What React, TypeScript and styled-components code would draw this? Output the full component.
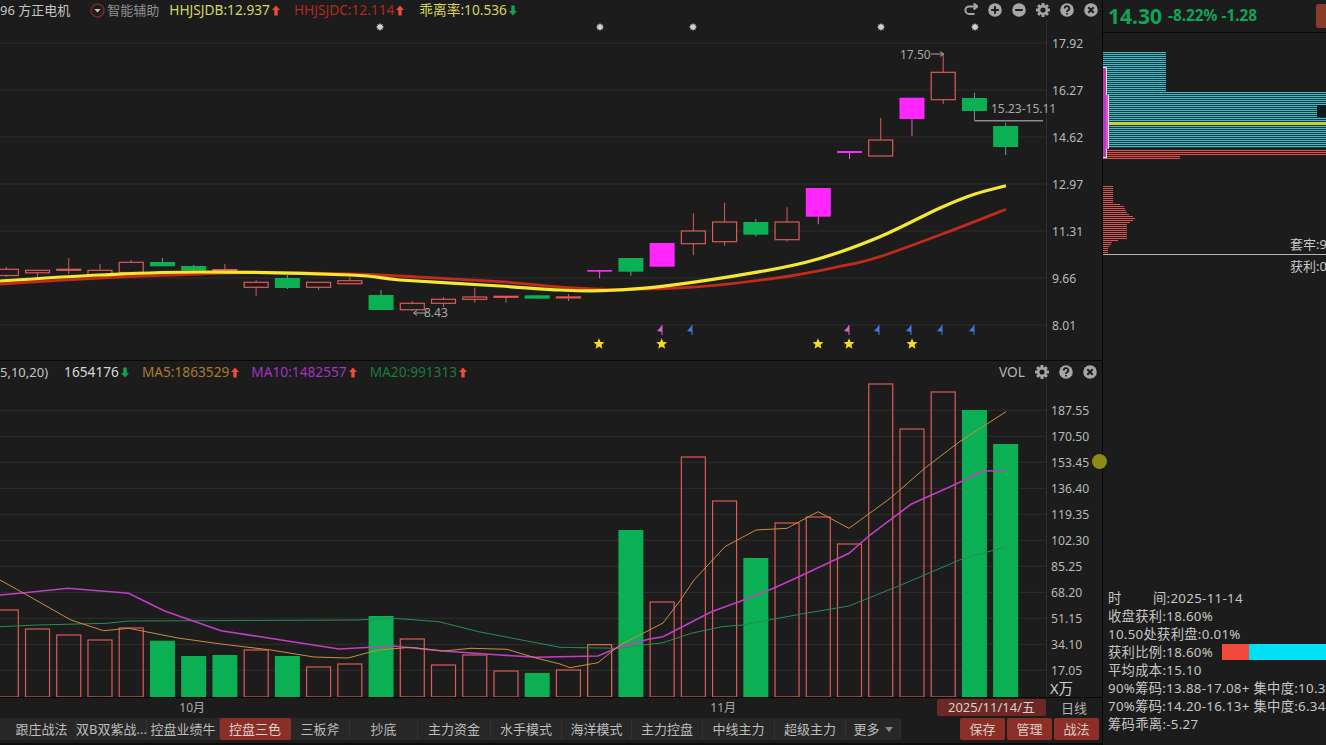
import React from "react";
import styled, { createGlobalStyle } from "styled-components";

const Global = createGlobalStyle`
  html, body { margin: 0; padding: 0; background: #1b1c1b; overflow: hidden; }
  #root { width: 1326px; height: 745px; }
`;

const FONT = `"Noto Sans", "Noto Sans CJK SC", sans-serif`;
const RED = "#dd5a55";
const GREEN = "#0bb055";
const MAGENTA = "#ff26ff";
const GRID = "#2f2f2d";

const App_ = styled.div`
  position: relative;
  display: flex;
  width: 1326px;
  height: 745px;
  overflow: hidden;
  background: #1b1c1b;
  font: 13px/18px ${FONT};
  color: #c4c4c4;
`;
const LeftColumn = styled.div`
  display: flex;
  flex-direction: column;
  width: 1102px;
  flex: none;
  border-right: 1px solid #050505;
`;
const Pane = styled.section<{ $h: number }>`
  display: flex;
  flex-direction: column;
  height: ${(p) => p.$h}px;
  box-sizing: border-box;
  flex: none;
  border-bottom: 1px solid #060606;
`;
const Header = styled.div<{ $top?: number }>`
  display: flex;
  align-items: center;
  height: 20px;
  box-sizing: border-box;
  padding-top: ${(p) => p.$top ?? 0}px;
  flex: none;
  white-space: nowrap;
`;
const Legend = styled.span<{ $c: string; $x: number; $small?: boolean }>`
  display: inline-flex;
  align-items: center;
  gap: 2px;
  font-size: ${(p) => (p.$small ? 13 : 13.7)}px;
  color: ${(p) => p.$c};
  margin-left: ${(p) => p.$x}px;
`;
const Spacer = styled.div`
  flex: 1;
`;
const Tools = styled.div<{ $gap: number; $right: number }>`
  display: flex;
  align-items: center;
  gap: ${(p) => p.$gap}px;
  margin-right: ${(p) => p.$right}px;
`;
const ChartSvg = styled.svg`
  display: block;
  flex: 1;
  width: 1102px;
  min-height: 0;
`;
const AxisText = styled.text<{ $big?: boolean }>`
  font: ${(p) => (p.$big ? 14.5 : 12.2)}px ${FONT};
  fill: ${(p) => (p.$big ? "#cfcfcf" : "#b9b9b9")};
`;
const ChartNote = styled.text`
  font: 12px ${FONT};
  fill: #a9a9a9;
`;
const DateRow = styled.div`
  display: flex;
  align-items: center;
  height: 19px;
  flex: none;
`;
const Month = styled.span<{ $w: number }>`
  width: ${(p) => p.$w}px;
  text-align: right;
  color: #a9a9a9;
  font-size: 12px;
  flex: none;
`;
const DateBadge = styled.span`
  margin-left: auto;
  width: 109px;
  height: 17px;
  line-height: 17px;
  text-align: center;
  background: #6b2825;
  border-radius: 2px;
  color: #d9d0cc;
`;
const Period = styled.span`
  width: 56px;
  text-align: center;
  color: #b4b4b4;
`;
const BottomBar = styled.div`
  display: flex;
  height: 28px;
  flex: none;
  padding: 1px 0 3px;
  box-sizing: border-box;
  border-bottom: 2px solid #0c0c0c;
`;
const Tabs = styled.div`
  display: flex;
  width: 901px;
  padding-left: 7px;
  box-sizing: border-box;
  background: #262726;
  border-radius: 0 3px 3px 0;
  flex: none;
`;
const Tab = styled.div<{ $w: number; $active?: boolean }>`
  width: ${(p) => p.$w}px;
  flex: none;
  display: flex;
  align-items: center;
  justify-content: center;
  gap: 5px;
  box-sizing: border-box;
  white-space: nowrap;
  background: ${(p) => (p.$active ? "#8a2f28" : "transparent")};
  border-radius: 2px;
  border-right: 1px solid ${(p) => (p.$active ? "transparent" : "#323331")};
  color: ${(p) => (p.$active ? "#e0d0ca" : "#bdbdbd")};
`;
const Caret = styled.span`
  width: 0;
  height: 0;
  border: 4px solid transparent;
  border-top: 5px solid #8a8a8a;
  border-bottom: 0;
`;
const Actions = styled.div`
  display: flex;
  gap: 2px;
  margin-left: auto;
  margin-right: 3px;
`;
const Action = styled.div`
  width: 45px;
  display: flex;
  align-items: center;
  justify-content: center;
  background: #8c2f29;
  border-radius: 2px;
  color: #dccbc4;
`;
const RightPanel = styled.aside`
  flex: 1;
  min-width: 0;
  display: flex;
  flex-direction: column;
  overflow: hidden;
`;
const Quote = styled.div`
  display: flex;
  align-items: center;
  gap: 6px;
  height: 32px;
  flex: none;
  padding-left: 5px;
  border-bottom: 1px solid #060606;
  color: #10a456;
  font-weight: 700;
  white-space: nowrap;
`;
const Price = styled.span`
  font-size: 21px;
`;
const Delta = styled.span`
  font-size: 15.4px;
`;
const QuoteButton = styled.span`
  margin-left: auto;
  width: 10px;
  height: 24px;
  background: #8c3a2c;
  border-radius: 2px 0 0 2px;
`;
const ChipSvg = styled.svg`
  display: block;
  width: 223px;
  height: 556px;
  flex: none;
`;
const ChipLabel = styled.text`
  font: 13px ${FONT};
  fill: #c8c8c8;
`;
const Info = styled.div`
  display: flex;
  flex-direction: column;
  padding-left: 5px;
  font-size: 13.3px;
  letter-spacing: 0.3px;
`;
const InfoRow = styled.div`
  display: flex;
  align-items: center;
  height: 18px;
  white-space: nowrap;
  color: #c6c6c6;
`;
const Wide = styled.span`
  width: 45px;
  flex: none;
`;
const Ratio = styled.div`
  margin-left: auto;
  display: flex;
  width: 104px;
  height: 16px;
  flex: none;
`;
const RatioPart = styled.span<{ $c: string; $w: number }>`
  width: ${(p) => p.$w}px;
  background: ${(p) => p.$c};
  flex: none;
`;
const Knob = styled.div`
  position: absolute;
  left: 1092px;
  top: 454px;
  width: 15px;
  height: 15px;
  border-radius: 50%;
  background: #8e8a17;
`;

type Candle = [number, number, number, number, "r" | "g" | "m"];
// index-based: wick top, wick bottom, body top, body bottom, kind
const candles: Candle[] = [
  [267, 277, 269.3, 275.5, "r"], [270, 278, 270.3, 272.8, "r"], [258, 274, 269.3, 270.3, "r"],
  [264, 275, 270.3, 274.5, "r"], [260, 273, 262.3, 272.5, "r"], [258, 266, 262, 266.3, "g"],
  [265, 271, 266, 270.5, "g"], [264, 272, 269.6, 270.4, "r"], [280, 295.7, 282.3, 287.3, "r"],
  [275, 289, 278, 288, "g"], [282, 290, 282.3, 287.3, "r"], [276.7, 284, 280.7, 283.7, "r"],
  [290, 310, 295, 310, "g"], [301, 311, 303.3, 309.7, "r"], [297, 307, 299.3, 303.3, "r"],
  [287.7, 302.7, 297, 299.3, "r"], [296, 302.7, 296.3, 297, "r"], [295, 299, 295.3, 298.7, "g"],
  [294, 301, 296.9, 297.6, "r"], [270, 278.3, 270, 271.7, "m"], [258, 275.7, 258, 271.7, "g"],
  [243, 266.7, 243, 266.7, "m"], [213.3, 255.3, 231, 243.7, "r"], [202.7, 246, 222, 241.7, "r"],
  [219, 236.5, 222, 234.7, "g"], [207.3, 241.7, 222, 239.7, "r"], [188, 224.3, 188, 216.7, "m"],
  [151, 159, 151, 153, "m"], [118, 156, 140, 156, "r"], [97.7, 136, 97.7, 119, "m"],
  [53, 104, 72.3, 99.7, "r"], [92.7, 120.7, 98, 111, "g"], [122.7, 155, 126, 147, "g"],
];
const vols: [number, boolean][] = [
  [610, false], [629, false], [635, false], [640, false], [628, false], [640.7, true], [656, true],
  [655, true], [650, false], [656, true], [667, false], [664, false], [616, true], [639, false],
  [665, false], [655, false], [671, false], [673, true], [670, false], [644.7, false], [530, true],
  [602, false], [457, false], [501, false], [558, true], [523, false], [517, false], [544, false],
  [384, false], [429, false], [392, false], [410, true], [444, true],
];
const cx = (i: number) => 6.3 + 31.23 * i;
const BASE = 697;

const priceTicks: [number, string][] = [
  [43, "17.92"], [90, "16.27"], [137, "14.62"], [184, "12.97"], [231, "11.31"], [278, "9.66"], [325, "8.01"],
];
const volTicks = ["187.55", "170.50", "153.45", "136.40", "119.35", "102.30", "85.25", "68.20", "51.15", "34.10", "17.05"];

const P = (a: number[][]) => a.map((p) => p.join(",")).join(" ");
// smooth curve through the points (Catmull-Rom)
const smooth = (a: number[][]) => {
  let d = `M${a[0][0]} ${a[0][1]}`;
  for (let i = 0; i < a.length - 1; i++) {
    const p0 = a[Math.max(i - 1, 0)];
    const p1 = a[i];
    const p2 = a[i + 1];
    const p3 = a[Math.min(i + 2, a.length - 1)];
    const c1 = [p1[0] + (p2[0] - p0[0]) / 6, p1[1] + (p2[1] - p0[1]) / 6];
    const c2 = [p2[0] - (p3[0] - p1[0]) / 6, p2[1] - (p3[1] - p1[1]) / 6];
    d += `C${c1[0].toFixed(1)} ${c1[1].toFixed(1)} ${c2[0].toFixed(1)} ${c2[1].toFixed(1)} ${p2[0]} ${p2[1]}`;
  }
  return d;
};
const yellow = [[0, 281], [100, 275], [200, 272], [350, 275], [400, 280], [500, 286], [560, 290], [600, 290.7], [660, 286.7], [760, 271.7], [818, 259], [880, 236.7], [940, 208], [975, 194], [1006, 185.7]];
const redMa = [[0, 284], [100, 278], [200, 274], [260, 272.7], [350, 274], [400, 276], [500, 281.7], [560, 287], [620, 289.4], [700, 286.7], [790, 276], [850, 264.3], [880, 256.7], [945, 233], [1006, 209.3]];
const ma5 = [[0, 580], [21, 591.7], [71, 620], [103.5, 630.7], [128.6, 628.3], [178, 638], [221, 644], [271, 650], [314, 657], [348, 658], [378, 650], [411, 647.3], [443, 651], [471, 648.3], [507, 649.3], [536, 658], [560, 664], [570, 667.7], [598, 662.7], [618.5, 646], [663, 623], [680.5, 600], [694, 580], [725, 546.7], [756, 530], [787, 528.3], [818, 511.7], [849, 528.3], [890.6, 498], [925, 468], [959.5, 441.7], [1006, 411.7]];
const ma10 = [[0, 595], [25, 592.7], [68, 588.3], [128.6, 593.3], [164, 610.7], [221, 630.7], [286, 640.7], [339, 649], [393, 646], [443, 651], [500, 655], [536, 657.3], [560, 656.7], [598, 656], [618.5, 647.3], [649.5, 639], [663, 636.7], [711.5, 611.7], [739, 601.7], [773.5, 588.3], [794, 579], [849, 553.3], [870, 535], [911, 504.3], [949, 487.3], [983.5, 471], [1006, 470.7]];
const ma20 = [[0, 626.7], [36, 625], [107, 623.3], [128.6, 621], [357, 620], [393, 618.3], [439, 621.7], [478.6, 631.7], [560, 647.3], [618.5, 648.3], [663, 642.7], [691, 633.3], [722, 626.7], [742.5, 625], [801, 614], [849, 606], [901, 585], [959.5, 560], [1006, 546.7]];

const stars = [599, 661.7, 818, 849, 912];
const flags: [number, string][] = [[662, "#d860c8"], [692, "#3f78d8"], [849, "#d860c8"], [879, "#3f78d8"], [911, "#3f78d8"], [942, "#3f78d8"], [974, "#3f78d8"]];
const sparks = [380, 600, 693, 881, 975];

const starPoints = (x: number, y: number, r: number, n = 5, inner = 0.45) =>
  Array.from({ length: n * 2 }, (_, i) => {
    const a = (Math.PI / n) * i - Math.PI / 2;
    const q = i % 2 ? r * inner : r;
    return `${(x + q * Math.cos(a)).toFixed(2)},${(y + q * Math.sin(a)).toFixed(2)}`;
  }).join(" ");

const Arrow = ({ up }: { up: boolean }) => (
  <svg width="8" height="11" viewBox="0 0 8 11">
    <polygon
      fill={up ? "#ee4a3e" : "#12a24f"}
      points={up ? "4,0.5 8,5 5.7,5 5.7,10.5 2.3,10.5 2.3,5 0,5" : "4,10.5 8,6 5.7,6 5.7,0.5 2.3,0.5 2.3,6 0,6"}
    />
  </svg>
);

type IconKind = "back" | "plus" | "minus" | "gear" | "help" | "close";
const Ico = "#a6a6a6";
const Dark = "#1b1c1b";
const ToolIcon = ({ kind }: { kind: IconKind }) => (
  <svg width="14" height="14" viewBox="0 0 14 14">
    {kind === "back" && (
      <path d="M12.8 3.4H5.2A3.8 3.8 0 0 0 5.2 11H10.5M9.6 0.4L13.4 3.4 9.6 6.4" fill="none" stroke={Ico} strokeWidth="2" />
    )}
    {kind === "gear" && (
      <g>
        {[0, 45, 90, 135].map((a) => (
          <rect key={a} x="5.5" y="0" width="3" height="14" rx="0.6" fill={Ico} transform={`rotate(${a} 7 7)`} />
        ))}
        <circle cx="7" cy="7" r="5" fill={Ico} />
        <circle cx="7" cy="7" r="2.6" fill={Dark} />
      </g>
    )}
    {(kind === "plus" || kind === "minus" || kind === "help" || kind === "close") && <circle cx="7" cy="7" r="6.8" fill={Ico} />}
    {kind === "plus" && <path d="M3.2 7H10.8M7 3.2V10.8" stroke={Dark} strokeWidth="2" />}
    {kind === "minus" && <path d="M3.2 7H10.8" stroke={Dark} strokeWidth="2" />}
    {kind === "close" && <path d="M4.3 4.3L9.7 9.7M9.7 4.3L4.3 9.7" stroke={Dark} strokeWidth="2" />}
    {kind === "help" && (
      <g fill="none" stroke={Dark} strokeWidth="1.8">
        <path d="M4.7 5.4A2.3 2.2 0 1 1 7.9 7.4C7.2 7.8 7 8.1 7 9.1" />
        <path d="M7 10V11.6" />
      </g>
    )}
  </svg>
);
const AssistIcon = () => (
  <svg width="15" height="15" viewBox="0 0 15 15">
    <circle cx="7.5" cy="7.5" r="6.5" fill="#211b1b" stroke="#7a2a2a" strokeWidth="1.4" />
    <polygon points="4.4,6 10.6,6 7.5,9.6" fill="#c4c4c4" />
  </svg>
);

const CandleMark = ({ i, c }: { i: number; c: Candle }) => {
  const [wt, wb, bt, bb, kind] = c;
  const x = cx(i);
  const colour = kind === "r" ? RED : kind === "g" ? GREEN : MAGENTA;
  const wick = kind === "g" ? "#6f9d7f" : kind === "m" ? "#e45ee4" : RED;
  return (
    <g>
      <line x1={x} x2={x} y1={wt} y2={wb} stroke={wick} strokeWidth="1" />
      <rect
        x={x - (kind === "r" ? 12 : 12.5)}
        y={bt}
        width={kind === "r" ? 24 : 25}
        height={Math.max(bb - bt, 1)}
        fill={kind === "r" ? "#1b1c1b" : colour}
        stroke={kind === "r" ? colour : "none"}
        strokeWidth="1.2"
      />
    </g>
  );
};

const PriceChart = () => (
  <ChartSvg viewBox="0 20 1102 340">
    {priceTicks.map(([y]) => (
      <line key={y} x1="0" x2="1046" y1={y} y2={y} stroke={GRID} />
    ))}
    <line x1="1046.5" x2="1046.5" y1="20" y2="360" stroke={GRID} />
    {priceTicks.map(([y, t]) => (
      <AxisText key={t} x="1052" y={y + 4.5}>{t}</AxisText>
    ))}
    {sparks.map((x) => (
      <polygon key={x} points={starPoints(x, 27, 4, 8, 0.62)} fill="#cfcfcf" />
    ))}
    {candles.map((c, i) => (
      <CandleMark key={i} i={i} c={c} />
    ))}
    <path d={smooth(redMa)} fill="none" stroke="#c22a1c" strokeWidth="2.8" />
    <path d={smooth(yellow)} fill="none" stroke="#f3e832" strokeWidth="3.2" />
    <ChartNote x="900" y="59">17.50</ChartNote>
    <path d="M931 54H943M940 51.5L943.5 54 940 56.5" fill="none" stroke="#a9a9a9" />
    <ChartNote x="991" y="113">15.23-15.11</ChartNote>
    <line x1="974.5" x2="1043" y1="120.7" y2="120.7" stroke="#8d8d8b" strokeWidth="1.4" />
    <path d="M426 313H414M417 310.5L413.5 313 417 315.5" fill="none" stroke="#a9a9a9" />
    <ChartNote x="424" y="317">8.43</ChartNote>
    {flags.map(([x, c]) => (
      <g key={x}>
        <line x1={x} x2={x} y1="325" y2="335" stroke={c} />
        <polygon points={`${x},325.5 ${x - 5},331 ${x},332`} fill={c} />
      </g>
    ))}
    {stars.map((x) => (
      <polygon key={x} points={starPoints(x, 344, 5.8)} fill="#f5dc1f" />
    ))}
  </ChartSvg>
);

const VolumeChart = () => (
  <ChartSvg viewBox="0 381 1102 316">
    {volTicks.map((t, i) => (
      <line key={t} x1="0" x2="1046" y1={410.3 + i * 26} y2={410.3 + i * 26} stroke={GRID} />
    ))}
    <line x1="1046.5" x2="1046.5" y1="381" y2="697" stroke={GRID} />
    {volTicks.map((t, i) => (
      <AxisText key={t} x="1051" y={415 + i * 26}>{t}</AxisText>
    ))}
    <AxisText $big x="1050" y="694">X万</AxisText>
    {vols.map(([top, down], i) => (
      <rect
        key={i}
        x={cx(i) - (down ? 12.5 : 12)}
        y={top}
        width={down ? 25 : 24}
        height={BASE - top}
        fill={down ? GREEN : "none"}
        stroke={down ? "none" : i === 19 ? "#d9714f" : RED}
        strokeWidth="1.2"
      />
    ))}
    <polyline points={P(ma20)} fill="none" stroke="#2c8a52" strokeWidth="1" />
    <polyline points={P(ma10)} fill="none" stroke="#c13ec7" strokeWidth="1.6" />
    <polyline points={P(ma5)} fill="none" stroke="#c98c44" strokeWidth="1" />
  </ChartSvg>
);

// width of the lower profile at a given y (straight runs between these knots)
const profile: [number, number][] = [[186, 10], [202, 10], [205, 20], [213, 24], [217, 32], [219, 32], [224, 24], [238, 24], [241, 10], [248, 5], [254, 5]];
const profileWidth = (y: number) => {
  for (let i = 0; i < profile.length - 1; i++) {
    const [a, wa] = profile[i];
    const [b, wb] = profile[i + 1];
    if (y <= b) return wa + ((wb - wa) * (y - a)) / (b - a);
  }
  return 5;
};
const profileRows = Array.from({ length: 35 }, (_, i) => 186 + i * 2);

const ChipChart = () => (
  <ChipSvg viewBox="1103 33 223 556" shapeRendering="crispEdges">
    <defs>
      <pattern id="stripe-cyan" width="4" height="2" patternUnits="userSpaceOnUse">
        <rect width="4" height="2" fill="#143a3e" />
        <rect width="4" height="1" fill="#45b7c5" />
      </pattern>
      <pattern id="stripe-red" width="4" height="2" patternUnits="userSpaceOnUse">
        <rect width="4" height="2" fill="#3b1715" />
        <rect width="4" height="1" fill="#d8544c" />
      </pattern>
    </defs>
    <rect x="1103" y="52" width="63" height="40" fill="url(#stripe-cyan)" />
    <rect x="1103" y="92" width="223" height="56" fill="url(#stripe-cyan)" />
    <rect x="1317" y="105" width="9" height="12" fill="#0f1a1b" />
    <rect x="1108" y="122" width="218" height="3" fill="#cdd12c" />
    <rect x="1103" y="149" width="223" height="6" fill="url(#stripe-red)" />
    <rect x="1103" y="155" width="77" height="4" fill="url(#stripe-red)" />
    <rect x="1103" y="67" width="3" height="91" fill="#b83cb8" />
    <rect x="1106" y="67" width="1" height="91" fill="#ece0ec" />
    <rect x="1103" y="67" width="4" height="1" fill="#ece0ec" />
    <rect x="1103" y="157" width="4" height="1" fill="#ece0ec" />
    <rect x="1106" y="95" width="2" height="54" fill="#e050e0" />
    <rect x="1108" y="95" width="1" height="54" fill="#e8dce8" />
    {profileRows.map((y) => (
      <rect key={y} x="1103" y={y} width={Math.round(profileWidth(y))} height="1" fill="#d8544c" />
    ))}
    <rect x="1103" y="254" width="223" height="1" fill="#b4b4b0" />
    <ChipLabel x="1290" y="249">套牢:9</ChipLabel>
    <ChipLabel x="1290" y="271">获利:0</ChipLabel>
  </ChipSvg>
);

const tabs: { t: string; w: number; active?: boolean }[] = [
  { t: "跟庄战法", w: 70 }, { t: "双B双紫战...", w: 70 }, { t: "控盘业绩牛", w: 73 },
  { t: "控盘三色", w: 71, active: true }, { t: "三板斧", w: 59 }, { t: "抄底", w: 68 },
  { t: "主力资金", w: 73 }, { t: "水手模式", w: 71 }, { t: "海洋模式", w: 70 },
  { t: "主力控盘", w: 71 }, { t: "中线主力", w: 72 }, { t: "超级主力", w: 71 },
];

export default function App() {
  return (
    <App_>
      <Global />
      <LeftColumn>
        <Pane $h={361}>
          <Header>
            <span>96 方正电机</span>
            <Legend $c="#8f8f8f" $x={20} $small><AssistIcon /> 智能辅助</Legend>
            <Legend $c="#d6d66c" $x={10}>HHJSJDB:12.937<Arrow up /></Legend>
            <Legend $c="#b3291f" $x={14}>HHJSJDC:12.114<Arrow up /></Legend>
            <Legend $c="#d6d45e" $x={15}>乖离率:10.536<Arrow up={false} /></Legend>
            <Spacer />
            <Tools $gap={10} $right={4}>
              <ToolIcon kind="back" />
              <ToolIcon kind="plus" />
              <ToolIcon kind="minus" />
              <ToolIcon kind="gear" />
              <ToolIcon kind="help" />
              <ToolIcon kind="close" />
            </Tools>
          </Header>
          <PriceChart />
        </Pane>
        <Pane $h={337}>
          <Header $top={2}>
            <span>5,10,20)</span>
            <Legend $c="#d8d8d8" $x={16}>1654176<Arrow up={false} /></Legend>
            <Legend $c="#ad7a32" $x={13}>MA5:1863529<Arrow up /></Legend>
            <Legend $c="#a433c4" $x={12}>MA10:1482557<Arrow up /></Legend>
            <Legend $c="#1d7a3d" $x={13}>MA20:991313<Arrow up /></Legend>
            <Spacer />
            <Legend $c="#b4b4b4" $x={0}>VOL</Legend>
            <Tools $gap={10} $right={5}>
              <span />
              <ToolIcon kind="gear" />
              <ToolIcon kind="help" />
              <ToolIcon kind="close" />
            </Tools>
          </Header>
          <VolumeChart />
        </Pane>
        <DateRow>
          <Month $w={205}>10月</Month>
          <Month $w={531}>11月</Month>
          <DateBadge>2025/11/14/五</DateBadge>
          <Period>日线</Period>
        </DateRow>
        <BottomBar>
          <Tabs>
            {tabs.map((t) => (
              <Tab key={t.t} $w={t.w} $active={t.active}>{t.t}</Tab>
            ))}
            <Tab $w={55}>更多<Caret /></Tab>
          </Tabs>
          <Actions>
            <Action>保存</Action>
            <Action>管理</Action>
            <Action>战法</Action>
          </Actions>
        </BottomBar>
      </LeftColumn>
      <RightPanel>
        <Quote>
          <Price>14.30</Price>
          <Delta>-8.22% -1.28</Delta>
          <QuoteButton />
        </Quote>
        <ChipChart />
        <Info>
          <InfoRow><Wide>时</Wide>间:2025-11-14</InfoRow>
          <InfoRow>收盘获利:18.60%</InfoRow>
          <InfoRow>10.50处获利盘:0.01%</InfoRow>
          <InfoRow>获利比例:18.60%<Ratio><RatioPart $c="#f24a3a" $w={27} /><RatioPart $c="#00e0f5" $w={77} /></Ratio></InfoRow>
          <InfoRow>平均成本:15.10</InfoRow>
          <InfoRow>90%筹码:13.88-17.08+ 集中度:10.33</InfoRow>
          <InfoRow>70%筹码:14.20-16.13+ 集中度:6.34</InfoRow>
          <InfoRow>筹码乖离:-5.27</InfoRow>
        </Info>
      </RightPanel>
      <Knob />
    </App_>
  );
}
